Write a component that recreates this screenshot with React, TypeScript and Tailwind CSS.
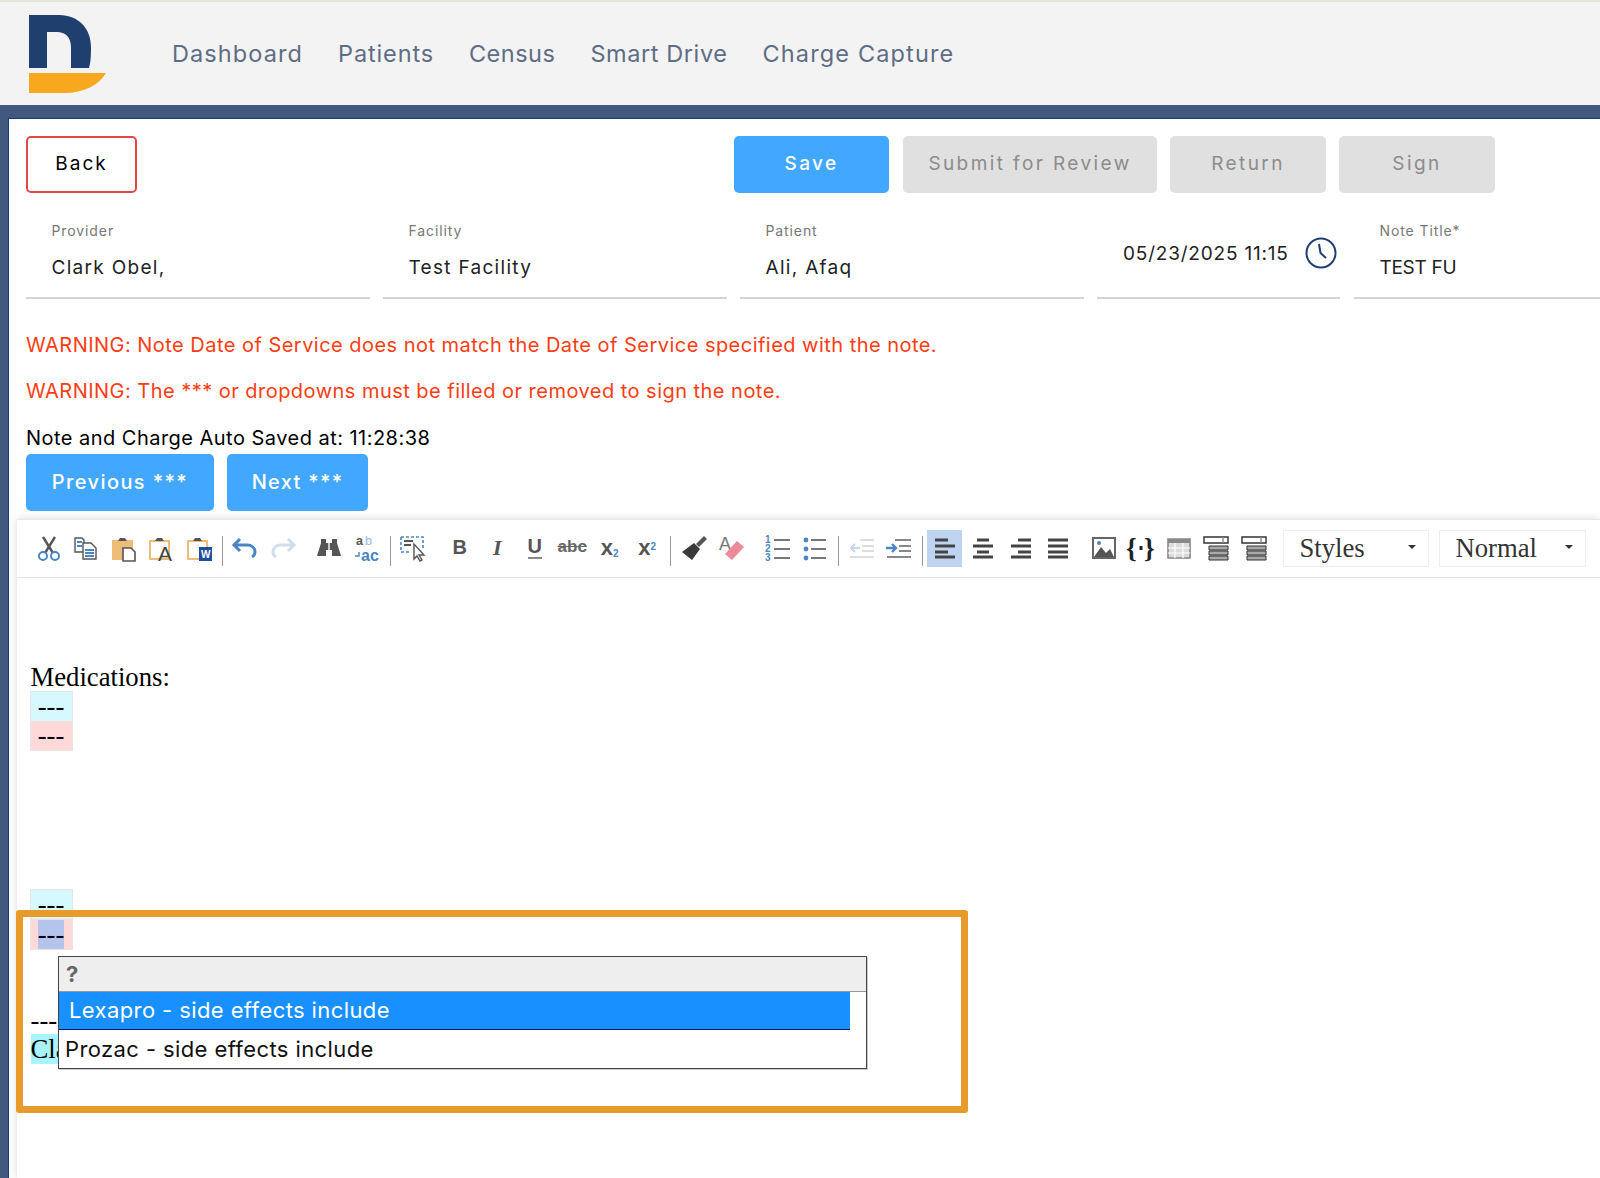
import type { ReactNode } from "react";

const navItems = [
  { label: "Dashboard", className: "tracking-[1.1px]" },
  { label: "Patients", className: "tracking-[0.85px]" },
  { label: "Census", className: "tracking-[0.5px]" },
  { label: "Smart Drive", className: "tracking-[0.58px]" },
  { label: "Charge Capture", className: "tracking-[1.14px]" },
];

const grey = "#555555";
const blue = "#4a86c5";
const tan = "#ecbc78";

function Svg({ children }: { children: ReactNode }) {
  return (
    <svg width="28" height="28" viewBox="0 1 28 28" fill="none" className="overflow-visible">
      {children}
    </svg>
  );
}

function Lines({ rows, color = grey, width = 2 }: { rows: number[][]; color?: string; width?: number }) {
  return (
    <>
      {rows.map(([x1, x2, y], i) => (
        <path key={i} d={`M${x1} ${y}H${x2}`} stroke={color} strokeWidth={width} />
      ))}
    </>
  );
}

function ClipBoard({ fill = false }: { fill?: boolean }) {
  return (
    <>
      <path d="M3 7H22V25H3Z" fill={fill ? tan : "none"} stroke={tan} strokeWidth="2" />
      <path d="M8 7L10 4H15L17 7Z" fill={grey} />
    </>
  );
}

const icons: Record<string, ReactNode> = {
  cut: (
    <Svg>
      <path d="M8 3L18 19M20 3L10 19" stroke={grey} strokeWidth="2.4" />
      <circle cx="8" cy="22" r="4" stroke={blue} strokeWidth="2" />
      <circle cx="20" cy="22" r="4" stroke={blue} strokeWidth="2" />
    </Svg>
  ),
  copy: (
    <Svg>
      <path d="M3 4H10L12 6V18H3Z" fill="white" stroke={grey} strokeWidth="1.4" />
      <path d="M11 9H19L24 14V25H11Z" fill="white" stroke={grey} strokeWidth="1.4" />
      <Lines rows={[[5, 10, 8], [5, 10, 12]]} color={blue} />
      <Lines rows={[[13, 22, 16], [13, 22, 19], [13, 22, 22]]} color={blue} />
    </Svg>
  ),
  paste: (
    <Svg>
      <ClipBoard fill />
      <path d="M13 14H21L25 18V27H13Z" fill="white" stroke={grey} strokeWidth="1.6" />
    </Svg>
  ),
  pasteText: (
    <Svg>
      <ClipBoard />
      <text x="11" y="27" fontSize="21" fontFamily="Liberation Sans" fill="#444444">A</text>
    </Svg>
  ),
  pasteWord: (
    <Svg>
      <ClipBoard />
      <path d="M14 13H27V27H14Z" fill="#1f4e9c" />
      <text x="16" y="24" fontSize="10" fontWeight="700" fontFamily="Liberation Sans" fill="white">W</text>
    </Svg>
  ),
  undo: (
    <Svg>
      <path d="M9 5L3 11L9 17M4 11H16C21 11 24 14 24 18C24 20 23 22 21 23" stroke={blue} strokeWidth="3" />
    </Svg>
  ),
  redo: (
    <Svg>
      <path d="M19 5L25 11L19 17M24 11H12C7 11 4 14 4 18C4 20 5 22 7 23" stroke="#cfdeee" strokeWidth="3" />
    </Svg>
  ),
  find: (
    <Svg>
      <path d="M6 5H11V9H17V5H22V9L26 22H17V16H11V22H2L6 9Z" fill={grey} />
      <path d="M14 9V22" stroke="white" strokeWidth="1.4" />
    </Svg>
  ),
  replace: (
    <Svg>
      <text x="3" y="11" fontSize="12.5" fontWeight="700" fontFamily="Liberation Sans" fill={grey}>a</text>
      <text x="12" y="11" fontSize="12.5" fontFamily="Liberation Sans" fill="#9bb8d8">b</text>
      <text x="8" y="27" fontSize="16" fontWeight="700" fontFamily="Liberation Sans" fill={blue}>ac</text>
      <path d="M2 22H6V18" stroke={blue} strokeWidth="1.4" />
    </Svg>
  ),
  selectAll: (
    <Svg>
      <path d="M2 3H24V16M2 3V18H12" stroke={blue} strokeWidth="1.6" strokeDasharray="3 2" />
      <Lines rows={[[5, 14, 7], [5, 12, 11]]} />
      <path d="M15 10V25L18 22L21 27L23 26L20 21H25Z" fill="white" stroke={grey} strokeWidth="1.4" />
    </Svg>
  ),
  brush: (
    <Svg>
      <path d="M24 2L27 5L19 13L16 10Z" fill={grey} />
      <path d="M14 9L20 15L12 26L2 18Z" fill="#3a3a3a" />
    </Svg>
  ),
  eraser: (
    <Svg>
      <text x="2" y="16" fontSize="18" fontFamily="Liberation Sans" fill="#777777">A</text>
      <path d="M20 7L27 13L15 26L8 20Z" fill="#ec8a9a" />
    </Svg>
  ),
  ol: (
    <Svg>
      <text x="1" y="9" fontSize="10" fontWeight="700" fontFamily="Liberation Sans" fill={blue}>1</text>
      <text x="1" y="18" fontSize="10" fontWeight="700" fontFamily="Liberation Sans" fill={blue}>2</text>
      <text x="1" y="27" fontSize="10" fontWeight="700" fontFamily="Liberation Sans" fill={blue}>3</text>
      <Lines rows={[[10, 26, 6], [10, 26, 15], [10, 26, 24]]} color="#777777" />
    </Svg>
  ),
  ul: (
    <Svg>
      <circle cx="5" cy="6" r="2.4" fill={blue} />
      <circle cx="5" cy="15" r="2.4" fill={blue} />
      <circle cx="5" cy="24" r="2.4" fill={blue} />
      <Lines rows={[[10, 25, 6], [10, 25, 15], [10, 25, 24]]} color="#777777" />
    </Svg>
  ),
  outdent: (
    <Svg>
      <Lines rows={[[12, 26, 6], [14, 26, 12], [14, 26, 17], [2, 26, 23]]} color="#dddddd" />
      <path d="M12 14H3M7 10L3 14L7 18" stroke="#c5d7ea" strokeWidth="2" />
    </Svg>
  ),
  indent: (
    <Svg>
      <Lines rows={[[10, 26, 6], [14, 26, 12], [14, 26, 17], [2, 26, 23]]} color="#888888" />
      <path d="M1 14H11M7 10L11 14L7 18" stroke={blue} strokeWidth="2.4" />
    </Svg>
  ),
  left: (
    <Svg>
      <Lines rows={[[4, 17, 6], [4, 24, 12], [4, 17, 18], [4, 24, 23]]} color="#444444" width={3} />
    </Svg>
  ),
  center: (
    <Svg>
      <Lines rows={[[8, 20, 6], [4, 24, 12], [8, 20, 18], [4, 24, 23]]} color="#444444" width={3} />
    </Svg>
  ),
  right: (
    <Svg>
      <Lines rows={[[11, 24, 6], [4, 24, 12], [11, 24, 18], [4, 24, 23]]} color="#444444" width={3} />
    </Svg>
  ),
  justify: (
    <Svg>
      <Lines rows={[[4, 24, 6], [4, 24, 12], [4, 24, 18], [4, 24, 23]]} color="#444444" width={3} />
    </Svg>
  ),
  image: (
    <Svg>
      <path d="M3 4H25V24H3Z" fill="white" stroke="#666666" strokeWidth="2" />
      <path d="M4 23L11 13L16 19L20 15L24 23Z" fill="#555555" />
      <circle cx="9" cy="9" r="2" fill={blue} />
    </Svg>
  ),
  snippet: (
    <Svg>
      <text x="-1" y="23" fontSize="27" fontWeight="700" fontFamily="Liberation Serif" fill="#222222">{"{"}</text>
      <text x="17" y="23" fontSize="27" fontWeight="700" fontFamily="Liberation Serif" fill="#222222">{"}"}</text>
      <rect x="12.5" y="12" width="3" height="4" fill="#222222" />
    </Svg>
  ),
  table: (
    <Svg>
      <path d="M3 5H25V24H3Z" fill="#dcdcdc" stroke="#888888" strokeWidth="1.6" />
      <path d="M3 5H25V9H3Z" fill="#888888" />
      <path d="M10 9V24M18 9V24M3 14H25M3 19H25" stroke="white" strokeWidth="1.2" />
    </Svg>
  ),
  rowA: (
    <Svg>
      <path d="M2 3H26V9H2Z" fill="white" stroke="#333333" strokeWidth="1.4" />
      <path d="M21 3V9" stroke="#888888" strokeWidth="1.4" />
      <path d="M7 12H26V16H7ZM7 17H26V21H7ZM7 22H26V26H7Z" fill="#aaaaaa" stroke="#333333" strokeWidth="1" />
    </Svg>
  ),
};

type Tool = { kind: "icon"; name: string; gap?: number; active?: boolean } | { kind: "text"; node: ReactNode; gap?: number } | { kind: "sep" };

const toolbar: Tool[] = [
  { kind: "icon", name: "cut" },
  { kind: "icon", name: "copy" },
  { kind: "icon", name: "paste" },
  { kind: "icon", name: "pasteText" },
  { kind: "icon", name: "pasteWord" },
  { kind: "sep" },
  { kind: "icon", name: "undo" },
  { kind: "icon", name: "redo" },
  { kind: "icon", name: "find", gap: 9 },
  { kind: "icon", name: "replace" },
  { kind: "sep" },
  { kind: "icon", name: "selectAll" },
  { kind: "text", gap: 9, node: <span className="font-['Liberation_Sans',sans-serif] text-[20px] font-bold text-[#555555]">B</span> },
  { kind: "text", node: <span className="font-['Liberation_Serif',serif] text-[22px] font-bold italic text-[#555555]">I</span> },
  { kind: "text", node: <span className="border-b-2 border-[#888888] font-['Liberation_Sans',sans-serif] text-[20px] leading-[21px] font-bold text-[#555555]">U</span> },
  { kind: "text", node: <span className="font-['Liberation_Sans',sans-serif] text-[17px] font-bold text-[#666666] line-through">abc</span> },
  {
    kind: "text",
    node: (
      <span className="font-['Liberation_Sans',sans-serif] text-[22px] font-bold text-[#555555]">
        x<sub className="text-[10px] text-[#4a86c5]">2</sub>
      </span>
    ),
  },
  {
    kind: "text",
    node: (
      <span className="font-['Liberation_Sans',sans-serif] text-[22px] font-bold text-[#555555]">
        x<sup className="text-[10px] text-[#4a86c5]">2</sup>
      </span>
    ),
  },
  { kind: "sep" },
  { kind: "icon", name: "brush" },
  { kind: "icon", name: "eraser" },
  { kind: "icon", name: "ol", gap: 9 },
  { kind: "icon", name: "ul" },
  { kind: "sep" },
  { kind: "icon", name: "outdent" },
  { kind: "icon", name: "indent" },
  { kind: "sep" },
  { kind: "icon", name: "left", active: true },
  { kind: "icon", name: "center" },
  { kind: "icon", name: "right" },
  { kind: "icon", name: "justify" },
  { kind: "icon", name: "image", gap: 8 },
  { kind: "icon", name: "snippet" },
  { kind: "icon", name: "table" },
  { kind: "icon", name: "rowA" },
  { kind: "icon", name: "rowA" },
];

function Toolbar() {
  return (
    <div className="flex h-[58px] items-center border-b border-[#e4e4e4] pl-[13px]">
      {toolbar.map((tool, i) => {
        if (tool.kind === "sep") {
          return <div key={i} className="mx-[4px] mt-[4px] h-[30px] w-[1px] bg-[#999999]" />;
        }
        const active = tool.kind === "icon" && tool.active;
        return (
          <div
            key={i}
            className={`flex h-[37px] items-center justify-center ${active ? "mr-[2.5px] w-[35px] bg-[#bfd4f0]" : "w-[37.5px]"} ${tool.kind === "text" ? "pb-[3px]" : ""}`}
            style={{ marginLeft: tool.gap ?? 0 }}
          >
            {tool.kind === "icon" ? icons[tool.name] : tool.node}
          </div>
        );
      })}
      <Combo label="Styles" className="ml-[10px] w-[146px]" />
      <Combo label="Normal" className="ml-[10px] w-[147px]" />
    </div>
  );
}

function Combo({ label, className }: { label: string; className: string }) {
  return (
    <div className={`flex h-[37px] items-center justify-between border border-[#eeeeee] pr-[12px] pl-[16px] font-['Liberation_Serif',serif] text-[26.7px] text-[#333333] ${className}`}>
      {label}
      <span className="mb-[4px] h-0 w-0 border-x-[4px] border-t-[4px] border-x-transparent border-t-[#333333]" />
    </div>
  );
}

function Field({ label, value, className, valueClass = "tracking-[1.3px]" }: { label: string; value: string; className: string; valueClass?: string }) {
  return (
    <div className={`h-[106px] border-b-2 border-[#d4d4d4] pt-[29px] pl-[25.5px] ${className}`}>
      <div className="text-[14px] leading-[18px] tracking-[0.9px] text-[#777777]">{label}</div>
      <div className={`mt-[15.5px] text-[19px] leading-[24px] text-[#222222] ${valueClass}`}>{value}</div>
    </div>
  );
}

function TagCell({ color, selected, tall }: { color: string; selected?: boolean; tall?: boolean }) {
  return (
    <div className={`flex w-[41px] items-center justify-center ${tall ? "h-[30px]" : "h-[29px]"} ${color}`}>
      <span className={`font-['Liberation_Serif',serif] leading-[29px] ${selected ? "bg-[#b5c4ec]" : ""}`}>---</span>
    </div>
  );
}

export default function App() {
  return (
    <div className="flex h-[1178px] flex-col overflow-hidden bg-white font-[Inter,sans-serif]">
      <header className="flex h-[105px] shrink-0 items-center border-t-2 border-[#e4e6d9] bg-[#f3f3f3] pl-[29px]">
        <svg width="78" height="80" viewBox="0 0 78 80" className="mt-[2px]">
          <path d="M0 0H30C50 0 62 14 62 32C62 42 61.5 48 60 53H42V32C42 22 36 17 28 17H18V53H0Z" fill="#1f3f6f" />
          <path d="M0 58H77C70 70 55 78 35 78H0Z" fill="#f7a81e" />
        </svg>
        <nav className="ml-[65px] flex gap-[35px] text-[23.5px] text-[#5f6c85]">
          {navItems.map((item) => (
            <span key={item.label} className={item.className}>{item.label}</span>
          ))}
        </nav>
      </header>

      <div className="flex min-h-0 flex-1 flex-col border-t-[13px] border-l-[8px] border-[#42587f]">
        <div className="flex min-h-0 flex-1 flex-col border-t border-l border-[#1a3c6c]">
          <div className="flex items-start pt-[17px] pl-[17px]">
            <button className="h-[57px] w-[111px] rounded-[5px] border-2 border-[#e04848] text-[19px] tracking-[2px] text-black">Back</button>
            <button className="ml-[597px] h-[57px] w-[155px] rounded-[5px] bg-[#42a8ff] text-[19px] font-medium tracking-[2.4px] text-white">Save</button>
            <button className="ml-[14px] h-[57px] w-[254px] rounded-[5px] bg-[#e0e0e0] text-[19px] tracking-[2.4px] text-[#8c8c8c]">Submit for Review</button>
            <button className="ml-[13px] h-[57px] w-[156px] rounded-[5px] bg-[#e0e0e0] text-[19px] tracking-[2.4px] text-[#8c8c8c]">Return</button>
            <button className="ml-[13px] h-[57px] w-[156px] rounded-[5px] bg-[#e0e0e0] text-[19px] tracking-[2.4px] text-[#8c8c8c]">Sign</button>
          </div>

          <div className="flex pl-[17px]">
            <Field label="Provider" value="Clark Obel," className="w-[344px]" />
            <Field label="Facility" value="Test Facility" className="ml-[13px] w-[344px]" />
            <Field label="Patient" value="Ali, Afaq" className="ml-[13px] w-[344px]" />
            <div className="ml-[13px] flex h-[106px] w-[243px] items-start border-b-2 border-[#d4d4d4] pt-[48px] pl-[26px]">
              <span className="text-[19px] leading-[26px] tracking-[0.8px] text-[#222222]">05/23/2025 11:15</span>
              <svg width="32" height="32" viewBox="0 0 32 32" fill="none" className="ml-[16px] mt-[-4px]">
                <circle cx="16" cy="16" r="14.5" stroke="#1f3f73" strokeWidth="2" />
                <path d="M14 7L15.5 16L21 21" stroke="#1f3f73" strokeWidth="2" />
              </svg>
            </div>
            <Field label="Note Title*" value="TEST FU" className="ml-[14px] flex-1" valueClass="tracking-[-0.3px]" />
          </div>

          <div className="pl-[17px] text-[20px] tracking-[0.47px] text-[#ff3d14]">
            <p className="mt-[32px] leading-[28px]">WARNING: Note Date of Service does not match the Date of Service specified with the note.</p>
            <p className="mt-[18px] leading-[28px]">WARNING: The *** or dropdowns must be filled or removed to sign the note.</p>
            <p className="mt-[19px] leading-[28px] text-black">Note and Charge Auto Saved at: 11:28:38</p>
          </div>

          <div className="mt-[2px] flex gap-[13px] pl-[17px]">
            <button className="h-[57px] w-[188px] rounded-[5px] bg-[#42a8ff] pb-[2px] text-[20px] font-medium tracking-[1.4px] text-white">Previous ***</button>
            <button className="h-[57px] w-[141px] rounded-[5px] bg-[#42a8ff] pb-[2px] text-[20px] font-medium tracking-[1.3px] text-white">Next ***</button>
          </div>

          <div className="mt-[8px] ml-[8px] flex min-h-0 flex-1 flex-col border-t border-[#e8e8e8] bg-white shadow-[0_0_8px_rgba(0,0,0,0.16)]">
            <Toolbar />
            <div className="relative flex-1 pt-[84px] pl-[13.5px] font-['Liberation_Serif',serif] text-[26.7px] text-black">
              <div className="leading-[30px]">Medications:</div>
              <div className="w-[41px] outline outline-[#e6e6e6]">
                <TagCell color="bg-[#d6f8ff]" />
                <TagCell color="bg-[#ffd8d8]" />
              </div>
              <div className="mt-[140px] w-[41px] outline outline-[#e6e6e6]">
                <TagCell color="bg-[#d6f8ff]" />
                <TagCell color="bg-[#ffd8d8]" selected tall />
              </div>
              <div className="mt-[58px] leading-[27px]">---</div>
              <div className="leading-[31px]">
                <span className="bg-[#aaf4ff]">Cla</span>
              </div>

              <div className="absolute top-[332px] left-[-1px] h-[203px] w-[952px] rounded-[3px] border-[7px] border-[#e89a2b]">
                <div className="absolute top-[39px] left-[35px] w-[809px] border border-[#444444] bg-white font-[Inter,sans-serif] shadow-[1px_1px_0_rgba(0,0,0,0.2)]">
                  <div className="flex h-[35px] items-center border-b border-[#999999] bg-[#eeeeee] pl-[7px] text-[22px] font-bold text-[#666666]">?</div>
                  <div className="flex h-[38px] w-[791px] items-center border-b border-[#00156b] bg-[#1890ff] pl-[10px] text-[22px] tracking-[0.4px] text-white">Lexapro - side effects include</div>
                  <div className="flex h-[38px] items-center pl-[6px] text-[22px] tracking-[0.4px] text-[#111111]">Prozac - side effects include</div>
                </div>
              </div>
            </div>
          </div>
        </div>
      </div>
    </div>
  );
}
